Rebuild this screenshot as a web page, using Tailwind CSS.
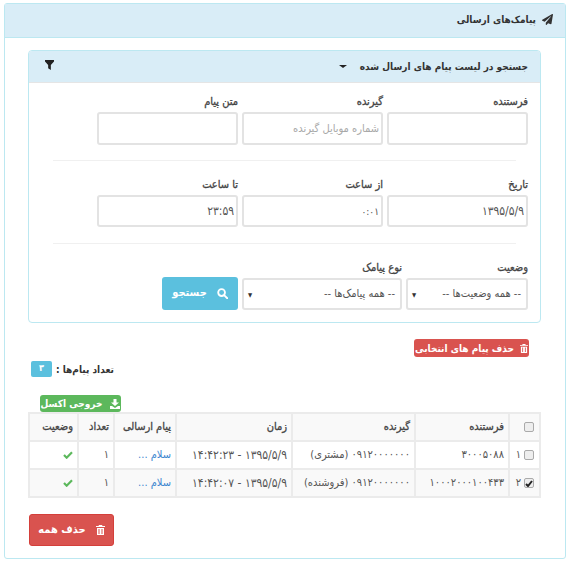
<!DOCTYPE html>
<html lang="fa" dir="rtl">
<head>
    <meta charset="UTF-8">
    <title>پیامک‌های ارسالی</title>
    <script src="https://cdn.jsdelivr.net/npm/@tailwindcss/browser@4"></script>
</head>
<body class="bg-white font-['DejaVu_Sans_Condensed','DejaVu_Sans',sans-serif] text-[#333] w-[569px] h-[561px] overflow-hidden">
    <div class="mt-[3px] mr-[3px] ml-[4px] w-[562px] h-[556px] border border-[#bce8f1] rounded-[3px]">
        <!-- عنوان -->
        <div class="h-[34px] bg-[#d9edf7] border-b border-[#bce8f1] flex items-center gap-[6px] pr-[12px] pb-[2px]">
            <svg class="w-[11px] h-[11px]" viewBox="0 0 512 512" fill="#333"><path d="M476 3 13 270c-18 10-16 36 3 43l106 44 287-253c6-5 13 3 8 8L176 405v82c0 24 29 34 43 16l64-78 125 52c14 6 31-3 33-18L512 28c3-21-18-35-36-25z"/></svg>
            <span class="text-[10px] font-bold">پیامک‌های ارسالی</span>
        </div>

        <div class="px-[24px] pt-[12px]">
            <!-- جستجو -->
            <div class="w-[513px] h-[273px] border border-[#bce8f1] rounded-[4px] overflow-hidden">
                <div class="h-[32px] bg-[#d9edf7] border-b border-[#e5e5e5] flex items-center justify-between pr-[12px] pl-[16px]">
                    <div class="flex items-center gap-[13px]">
                        <span class="text-[10px] font-bold">جستجو در لیست پیام های ارسال شده</span>
                        <span class="w-0 h-0 border-x-[4px] border-x-transparent border-t-[3px] border-t-[#222]"></span>
                    </div>
                    <svg class="w-[9px] h-[10px] mb-[4px]" viewBox="0 0 10 11" fill="#222"><path d="M0 0h10v1.5L6.5 5.5V11L3.5 9V5.500L0 1.500z"/></svg>
                </div>

                <div class="px-[12px]">
                    <div class="grid grid-cols-[141px_141px_141px] gap-x-[4px] pt-[11px]">
                        <label class="block">
                            <span class="block h-[18px] text-[11px] text-[#444] [-webkit-text-stroke:0.3px_#444]">فرستنده</span>
                            <input class="block w-full h-[33px] border-2 border-[#e3e3e3] rounded-[3px] bg-white">
                        </label>
                        <label class="block">
                            <span class="block h-[18px] text-[11px] text-[#444] [-webkit-text-stroke:0.3px_#444]">گیرنده</span>
                            <input placeholder="شماره موبایل گیرنده" class="block w-full h-[33px] border-2 border-[#e3e3e3] rounded-[3px] bg-white px-[2px] text-[11px] placeholder:text-[#a8a8a8]">
                        </label>
                        <label class="block">
                            <span class="block h-[18px] text-[11px] text-[#444] [-webkit-text-stroke:0.3px_#444]">متن پیام</span>
                            <input class="block w-full h-[33px] border-2 border-[#e3e3e3] rounded-[3px] bg-white">
                        </label>
                    </div>
                    <div class="h-px mx-[12px] mt-[15px] bg-[#f0f0f0]"></div>

                    <div class="grid grid-cols-[141px_141px_141px] gap-x-[4px] pt-[16px]">
                        <label class="block">
                            <span class="block h-[18px] text-[11px] text-[#444] [-webkit-text-stroke:0.3px_#444]">تاریخ</span>
                            <input value="۱۳۹۵/۵/۹" class="block w-full h-[32px] border-2 border-[#e3e3e3] rounded-[3px] bg-white px-[2px] text-[12px] text-[#555]">
                        </label>
                        <label class="block">
                            <span class="block h-[18px] text-[11px] text-[#444] [-webkit-text-stroke:0.3px_#444]">از ساعت</span>
                            <input value="۰:۰۱" class="block w-full h-[32px] border-2 border-[#e3e3e3] rounded-[3px] bg-white px-[2px] text-[10px] text-[#555]">
                        </label>
                        <label class="block">
                            <span class="block h-[18px] text-[11px] text-[#444] [-webkit-text-stroke:0.3px_#444]">تا ساعت</span>
                            <input value="۲۳:۵۹" class="block w-full h-[32px] border-2 border-[#e3e3e3] rounded-[3px] bg-white px-[2px] text-[12px] text-[#555]">
                        </label>
                    </div>
                    <div class="h-px mx-[12px] mt-[16px] bg-[#f0f0f0]"></div>

                    <div class="flex items-end gap-[4px] pt-[16px]">
                        <div class="w-[122px]">
                            <span class="block h-[18px] text-[11px] text-[#444] [-webkit-text-stroke:0.3px_#444]">وضعیت</span>
                            <div class="h-[32px] border-2 border-[#e3e3e3] rounded-[3px] flex items-center justify-between pr-[5px] pl-[4px] text-[11px] text-[#555]">
                                <span>-- همه وضعیت‌ها --</span><span class="text-[6px] text-[#333]">▼</span>
                            </div>
                        </div>
                        <div class="w-[160px]">
                            <span class="block h-[18px] text-[11px] text-[#444] [-webkit-text-stroke:0.3px_#444]">نوع پیامک</span>
                            <div class="h-[32px] border-2 border-[#e3e3e3] rounded-[3px] flex items-center justify-between pr-[5px] pl-[4px] text-[11px] text-[#555]">
                                <span>-- همه پیامک‌ها --</span><span class="text-[6px] text-[#333]">▼</span>
                            </div>
                        </div>
                        <button class="w-[76px] h-[33px] bg-[#5bc0de] rounded-[3px] text-white flex items-center justify-center gap-[10px] text-[11px] font-bold">
                            <svg class="w-[11px] h-[11px]" viewBox="0 0 12 12" fill="none" stroke="white" stroke-width="2"><circle cx="5" cy="5" r="3.700"/><path d="m8 8 3.200 3.200" stroke-linecap="round"/></svg>
                            <span>جستجو</span>
                        </button>
                    </div>
                </div>
            </div>

            <!-- حذف انتخابی -->
            <div class="pt-[16px] pr-[12px]">
                <button class="w-[115px] h-[18px] bg-[#d9534f] rounded-[3px] text-white flex items-center justify-center gap-[6px] text-[10px] font-bold">
                    <svg class="w-[8px] h-[9px]" viewBox="0 0 9 10" fill="white"><path d="M3 0h3l.5 1H9v1H0V1h2.500zM1 3h7v7H1zm1.500 1v5h1V4zm3 0v5h1V4z"/></svg>
                    <span>حذف پیام های انتخابی</span>
                </button>
            </div>

            <!-- تعداد -->
            <div class="flex items-center justify-end gap-[4px] h-[16px] mt-[4px] pl-[2px]">
                <span class="text-[10px] font-bold">تعداد پیام‌ها :</span>
                <span class="w-[21px] h-[16px] bg-[#5bc0de] rounded-[2px] text-white text-[9px] font-bold flex items-center justify-center">۳</span>
            </div>

            <div class="flex justify-end mt-[18px] pl-[11px]">
                <button class="w-[81px] h-[17px] bg-[#5cb85c] rounded-[3px] text-white flex items-center justify-center gap-[8px] text-[10px] font-bold">
                    <svg class="w-[10px] h-[10px]" viewBox="0 0 10 10" fill="white"><path d="M3.500 0h3v3.500H9L5 7 1 3.500h2.500zM0 7h2l3 2 3-2h2v3H0z"/></svg>
                    <span>خروجی اکسل</span>
                </button>
            </div>

            <!-- جدول -->
            <table class="w-[513px] table-fixed border-collapse border border-[#e3e3e3] text-[11px] text-[#555]">
                <thead>
                    <tr class="h-[28px] bg-[#f9f9f9] text-[11px] text-[#444] [-webkit-text-stroke:0.3px_#444]">
                        <th class="w-[31px] font-normal border-2 border-[#ebebeb] text-right pr-[5px]"><span class="inline-block align-middle w-[10px] h-[10px] border border-[#aaa] rounded-[2px] bg-[#eee]"></span></th>
                        <th class="w-[94px] font-normal border-2 border-[#ebebeb] text-right px-[4px] whitespace-nowrap">فرستنده</th>
                        <th class="w-[123px] font-normal border-2 border-[#ebebeb] text-right px-[4px] whitespace-nowrap">گیرنده</th>
                        <th class="w-[116px] font-normal border-2 border-[#ebebeb] text-right px-[4px] whitespace-nowrap">زمان</th>
                        <th class="w-[62px] font-normal border-2 border-[#ebebeb] text-right px-[4px] whitespace-nowrap">پیام ارسالی</th>
                        <th class="w-[36px] font-normal border-2 border-[#ebebeb] text-right px-[4px] whitespace-nowrap">تعداد</th>
                        <th class="font-normal border-2 border-[#ebebeb] text-right px-[4px] whitespace-nowrap">وضعیت</th>
                    </tr>
                </thead>
                <tbody>
                    <tr class="h-[28px] bg-white">
                        <td class="border-2 border-[#ebebeb] pr-[5px]"><div class="flex items-center gap-[3px]"><span class="w-[10px] h-[10px] border border-[#aaa] rounded-[2px] bg-[#eee]"></span><span>۱</span></div></td>
                        <td class="border-2 border-[#ebebeb] px-[4px]">۳۰۰۰۵۰۸۸</td>
                        <td class="border-2 border-[#ebebeb] px-[4px] whitespace-nowrap">۰۹۱۲۰۰۰۰۰۰۰ (مشتری)</td>
                        <td class="border-2 border-[#ebebeb] px-[4px] whitespace-nowrap text-[12px]">۱۳۹۵/۵/۹ - ۱۴:۴۲:۲۳</td>
                        <td class="border-2 border-[#ebebeb] px-[4px] text-[#3d86cf]">سلام ...</td>
                        <td class="border-2 border-[#ebebeb] px-[4px]">۱</td>
                        <td class="border-2 border-[#ebebeb] px-[4px]"><svg class="w-[10px] h-[8px]" viewBox="0 0 11 9" fill="none" stroke="#5cb85c" stroke-width="2.500"><path d="m1 4.500 3 3 6-6"/></svg></td>
                    </tr>
                    <tr class="h-[28px] bg-[#f9f9f9]">
                        <td class="border-2 border-[#ebebeb] pr-[5px]"><div class="flex items-center gap-[3px]"><span class="w-[10px] h-[10px] border border-[#aaa] rounded-[2px] bg-[#eee] flex items-center justify-center"><svg class="w-[8px] h-[7px]" viewBox="0 0 8 7" fill="none" stroke="#222" stroke-width="2"><path d="m1 4 2 2 4-5"/></svg></span><span>۲</span></div></td>
                        <td class="border-2 border-[#ebebeb] px-[4px]">۱۰۰۰۲۰۰۰۱۰۰۴۳۳</td>
                        <td class="border-2 border-[#ebebeb] px-[4px] whitespace-nowrap">۰۹۱۲۰۰۰۰۰۰۰ (فروشنده)</td>
                        <td class="border-2 border-[#ebebeb] px-[4px] whitespace-nowrap text-[12px]">۱۳۹۵/۵/۹ - ۱۴:۴۲:۰۷</td>
                        <td class="border-2 border-[#ebebeb] px-[4px] text-[#3d86cf]">سلام ...</td>
                        <td class="border-2 border-[#ebebeb] px-[4px]">۱</td>
                        <td class="border-2 border-[#ebebeb] px-[4px]"><svg class="w-[10px] h-[8px]" viewBox="0 0 11 9" fill="none" stroke="#5cb85c" stroke-width="2.500"><path d="m1 4.500 3 3 6-6"/></svg></td>
                    </tr>
                </tbody>
            </table>

            <div class="flex justify-end mt-[16px]">
                <button class="w-[85px] h-[32px] bg-[#d9534f] border border-[#d43f3a] rounded-[3px] text-white flex items-center justify-center gap-[10px] text-[11px] font-bold">
                    <svg class="w-[9px] h-[10px]" viewBox="0 0 9 10" fill="white"><path d="M3 0h3l.5 1H9v1H0V1h2.500zM1 3h7v7H1zm1.500 1v5h1V4zm3 0v5h1V4z"/></svg>
                    <span>حذف همه</span>
                </button>
            </div>
        </div>
    </div>
</body>
</html>
